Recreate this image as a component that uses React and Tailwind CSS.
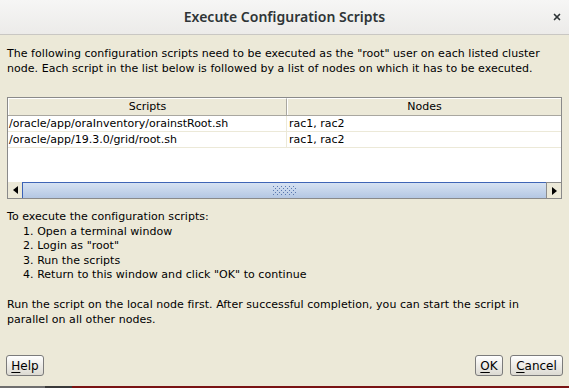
import { X } from "lucide-react";

const rows = [
  { script: "/oracle/app/oraInventory/orainstRoot.sh", nodes: "rac1, rac2" },
  { script: "/oracle/app/19.3.0/grid/root.sh", nodes: "rac1, rac2" },
];

const steps = [
  "Open a terminal window",
  'Login as "root"',
  "Run the scripts",
  'Return to this window and click "OK" to continue',
];

function Grip() {
  const dots = [];
  for (let r = 0; r < 5; r++) {
    for (let c = 0; c < 6; c++) {
      dots.push(<rect key={r + "-" + c} x={c * 4 + (r % 2) * 2} y={r * 2} width="1" height="1" fill="#5a78b0" />);
    }
  }
  return (
    <svg width="24" height="10" viewBox="0 0 24 10">
      {dots}
    </svg>
  );
}

function Arrow({ dir }) {
  return (
    <svg width="5" height="8" viewBox="0 0 5 8">
      {dir === "left" ? <path d="M5 0 L0 4 L5 8 Z" fill="#000" /> : <path d="M0 0 L5 4 L0 8 Z" fill="#000" />}
    </svg>
  );
}

function Button({ mnemonic, rest, className }) {
  return (
    <button
      type="button"
      className={
        "h-[21px] rounded-[3px] border border-[#7b7b7b] bg-gradient-to-b from-[#ffffff] to-[#dcdad2] text-[12px] text-black flex items-center justify-center " +
        className
      }
    >
      <span className="underline underline-offset-2">{mnemonic}</span>
      {rest}
    </button>
  );
}

export default function App() {
  return (
    <div className="w-[569px] h-[388px] flex flex-col bg-[#ece9d8] overflow-hidden font-['DejaVu_Sans',sans-serif] text-[11px] text-black">
      {/* Title bar */}
      <header className="relative h-[35px] shrink-0 flex items-center justify-center border-b border-[#c9c7c3] bg-gradient-to-b from-[#f6f6f5] to-[#ecebe9]">
        <h1 className="font-['Noto_Sans',sans-serif] font-semibold text-[14px] text-[#2e3436] -mt-[1px]">Execute Configuration Scripts</h1>
        <X className="absolute right-[7px] top-[12px] w-[10px] h-[10px] text-[#2e3436]" strokeWidth={4} />
      </header>

      {/* Body */}
      <div className="flex-1 flex flex-col px-[7px]">
        <p className="mt-[11px] leading-[15px] tracking-[0.04px]">
          The following configuration scripts need to be executed as the "root" user on each listed cluster
          <br />
          node. Each script in the list below is followed by a list of nodes on which it has to be executed.
        </p>

        {/* Table */}
        <div className="mt-[21px] h-[102px] border border-[#8a8a8a] bg-white flex flex-col">
          <div className="flex h-[18px] shrink-0 bg-[#ece9d8] border-b border-[#a9a7a0]">
            <div className="w-[279px] flex items-center justify-center border-r border-[#a9a7a0] border-l border-l-white border-t border-t-white">Scripts</div>
            <div className="flex-1 flex items-center justify-center border-t border-t-white border-l border-l-white">Nodes</div>
          </div>
          {rows.map((r) => (
            <div key={r.script} className="flex h-[16px] shrink-0 border-b border-[#ece9d8]">
              <div className="w-[279px] pl-[1px] pt-[1px] flex items-center border-r border-[#ece9d8]">{r.script}</div>
              <div className="flex-1 pl-[2px] pt-[1px] flex items-center">{r.nodes}</div>
            </div>
          ))}
          <div className="flex-1" />
          {/* Horizontal scrollbar */}
          <div className="flex h-[16px] shrink-0 bg-[#ece9d8]">
            <div className="w-[15px] flex items-center justify-center border-r border-[#3a62b8]">
              <Arrow dir="left" />
            </div>
            <div className="flex-1 flex items-center justify-center border-t border-[#3f65b6] bg-gradient-to-b from-[#d6e2f2] to-[#b4c7e3]">
              <Grip />
            </div>
            <div className="w-[15px] flex items-center justify-center border-l border-[#8c8c8c] border-t border-t-[#8c8c8c] bg-[#ece9d8]">
              <Arrow dir="right" />
            </div>
          </div>
        </div>

        <div className="mt-[11px] leading-[14.5px] tracking-[0.04px]">
          <p>To execute the configuration scripts:</p>
          <ol className="pl-[16px]">
            {steps.map((s, i) => (
              <li key={s}>
                {i + 1}. {s}
              </li>
            ))}
          </ol>
        </div>

        <p className="mt-[14px] leading-[15px] tracking-[0.04px]">
          Run the script on the local node first. After successful completion, you can start the script in
          <br />
          parallel on all other nodes.
        </p>

        <div className="mt-auto mb-[10px] flex items-center">
          <Button mnemonic="H" rest="elp" className="w-[38px] -ml-[1px]" />
          <div className="flex-1" />
          <Button mnemonic="O" rest="K" className="w-[28px]" />
          <Button mnemonic="C" rest="ancel" className="w-[53px] ml-[7px] -mr-[1px]" />
        </div>
      </div>

      <div className="h-[2px] shrink-0 flex">
        <div className="w-[45px] bg-[#6f6f6f]" />
        <div className="w-[27px] bg-[#3a3a3a]" />
        <div className="flex-1 bg-[#7a1414]" />
      </div>
    </div>
  );
}
